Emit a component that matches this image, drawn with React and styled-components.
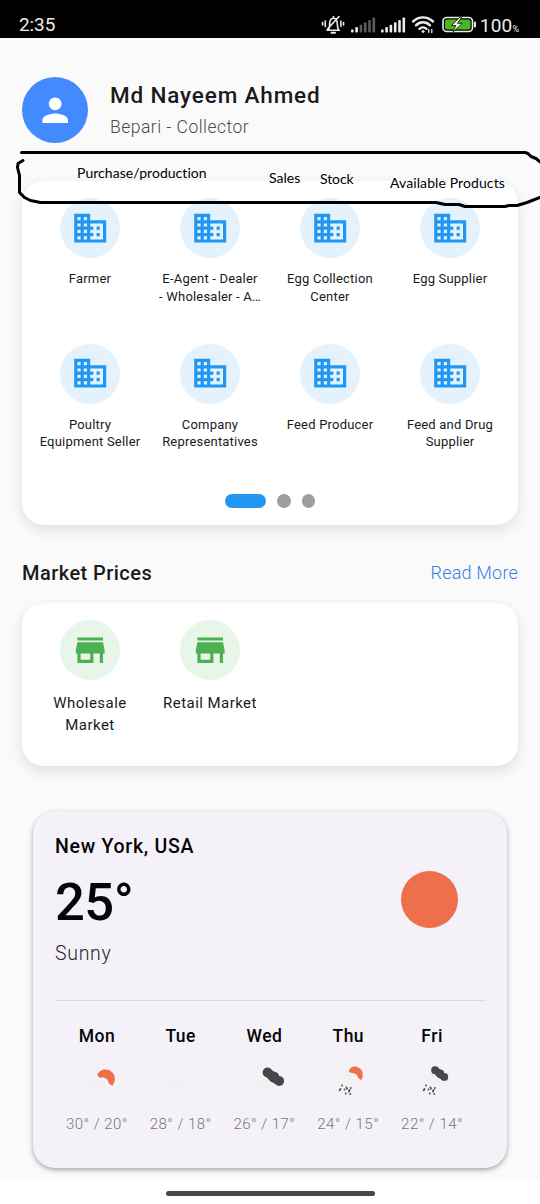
import React from 'react';
import styled, { createGlobalStyle } from 'styled-components';
import { MdBusiness, MdPerson, MdStore } from 'react-icons/md';

const Global = createGlobalStyle`
  * { box-sizing: border-box; }
  body { margin: 0; background: #fff; font-family: Roboto, "Liberation Sans", sans-serif; }
`;

const Screen = styled.div`
  position: relative;
  width: 540px;
  height: 1204px;
  overflow: hidden;
  display: flex;
  flex-direction: column;
  background: #fff;
  color: #1a1a1c;
`;

const StatusBar = styled.header`
  height: 38px;
  flex: none;
  padding: 12px 21px 0 19px;
  display: flex;
  justify-content: space-between;
  background: #000;
  color: #ececec;
`;

const Clock = styled.span`
  font-size: 19px;
  line-height: 26px;
  letter-spacing: -0.1px;
`;

const StatusIcons = styled.div`
  display: flex;
  height: 26px;
`;

const Battery = styled.span`
  font-size: 19px;
  line-height: 27px;
  letter-spacing: 0.2px;
  margin-left: 4px;
  small { font-size: 9px; letter-spacing: 0; }
`;

const Content = styled.main`
  height: 1143px;
  flex: none;
  padding: 39px 22px 0;
  overflow: hidden;
  background: #fafafa;
`;

const Profile = styled.section`
  height: 66px;
  display: flex;
  align-items: center;
  gap: 22px;
`;

const Avatar = styled.div`
  width: 66px;
  height: 66px;
  border-radius: 50%;
  display: grid;
  place-items: center;
  background: #448aff;
  color: #fff;
`;

const Name = styled.h1`
  margin: -3px 0 6px;
  font-size: 22.5px;
  font-weight: 500;
  line-height: 30px;
  letter-spacing: 0.85px;
`;

const Role = styled.p`
  margin: 0;
  font-size: 17.5px;
  font-weight: 300;
  line-height: 22px;
  letter-spacing: 0.48px;
  color: #4a4a4c;
`;

const Card = styled.section`
  height: ${(p) => p.$height}px;
  padding: 17px 8px 0;
  border-radius: 22px;
  background: #fff;
  box-shadow: 0 5px 14px rgba(0, 0, 0, 0.11);
`;

const ServiceCard = styled(Card)`
  margin-top: 38px;
`;

const Grid = styled.div`
  display: grid;
  grid-template-columns: repeat(4, 120px);
  grid-auto-rows: 145.5px;
`;

const Tile = styled.div`
  display: flex;
  flex-direction: column;
  align-items: center;
`;

const IconDisc = styled.div`
  width: 60px;
  height: 60px;
  flex: none;
  border-radius: 50%;
  display: grid;
  place-items: center;
  background: ${(p) => (p.$green ? '#e8f5e9' : '#e3f2fd')};
  color: ${(p) => (p.$green ? '#4caf50' : '#2196f3')};
`;

const TileLabel = styled.div`
  margin-top: ${(p) => (p.$large ? 12 : 12)}px;
  font-size: ${(p) => (p.$large ? 15 : 13)}px;
  line-height: ${(p) => (p.$large ? 22 : 17.8)}px;
  letter-spacing: ${(p) => (p.$large ? 0.45 : 0.2)}px;
  text-align: center;
  white-space: pre-line;
`;

const Pager = styled.div`
  margin-top: 5px;
  display: flex;
  justify-content: center;
  gap: 11px;
`;

const Dot = styled.span`
  width: ${(p) => (p.$active ? 41.5 : 13.6)}px;
  height: 13.6px;
  border-radius: 7px;
  background: ${(p) => (p.$active ? '#2196f3' : '#9e9e9e')};
`;

const SectionHead = styled.div`
  margin: 35px 0 17px;
  height: 26px;
  display: flex;
  justify-content: space-between;
  align-items: center;
`;

const SectionTitle = styled.h2`
  margin: 0;
  font-size: 20px;
  font-weight: 500;
  letter-spacing: 0.45px;
`;

const ReadMore = styled.a`
  font-size: 18px;
  font-weight: 300;
  line-height: 24px;
  letter-spacing: 0.2px;
  margin-top: -1px;
  color: #3b7de8;
`;

const Weather = styled.section`
  margin: 45px 11px 0;
  height: 357px;
  padding: 23px 21px 0 22px;
  border-radius: 22px;
  background: #f5f1f9;
  color: #050505;
  box-shadow: 0 2px 5px rgba(0, 0, 0, 0.34);
`;

const Current = styled.div`
  height: 167px;
  display: flex;
  justify-content: space-between;
  border-bottom: 1px solid #dedae2;
`;

const City = styled.h3`
  margin: 0;
  font-size: 19.5px;
  font-weight: 500;
  line-height: 26px;
  letter-spacing: 0.72px;
`;

const Temperature = styled.div`
  margin-top: 9px;
  font-size: 52.5px;
  font-weight: 500;
  line-height: 66px;
  letter-spacing: -0.5px;
`;

const Condition = styled.div`
  margin-top: 6px;
  font-size: 19.5px;
  font-weight: 300;
  line-height: 26px;
  letter-spacing: 0.7px;
  color: #29272c;
`;

const Sun = styled.div`
  width: 57px;
  height: 57px;
  margin: 37px 28px 0 0;
  border-radius: 50%;
  background: #ee6f4c;
`;

const Forecast = styled.div`
  padding-top: 22px;
  display: grid;
  grid-template-columns: repeat(5, 83.8px);
`;

const Day = styled.div`
  display: flex;
  flex-direction: column;
  align-items: center;
`;

const DayName = styled.div`
  margin-bottom: 10px;
  font-size: 17.5px;
  font-weight: 500;
  line-height: 26px;
  letter-spacing: 0.5px;
`;

const Range = styled.div`
  margin-top: 13px;
  font-size: 15px;
  font-weight: 300;
  line-height: 20px;
  letter-spacing: 0.45px;
  color: #77747a;
  white-space: nowrap;
`;

const HomeBar = styled.div`
  width: 209px;
  height: 5px;
  margin: 9.500px auto 0;
  border-radius: 3px;
  background: #484848;
`;

const Markup = styled.svg`
  position: absolute;
  left: 0;
  top: 140px;
`;

const Note = styled.span`
  position: absolute;
  left: ${(p) => p.$x}px;
  top: ${(p) => p.$y}px;
  font-family: Lato, sans-serif;
  font-size: 14px;
  line-height: 18px;
  letter-spacing: ${(p) => p.$spacing}px;
  color: #000;
  white-space: nowrap;
`;

const Signal = ({ lit }) =>
  [0, 1, 2, 3, 4, 5].map((i) => (
    <rect key={i} x={i * 4.3} y={18 - i * 2.4} width="2.6" height={3 + i * 2.4} rx="0.8" fill={i < lit ? '#ececec' : '#5c5c5c'} />
  ));

const StatusGlyphs = () => (
  <svg width="155" height="26" viewBox="320 12 155 26" fill="none" stroke="#ececec" strokeWidth="1.6" strokeLinecap="round">
    <path d="M326 30.2h12.5M327.5 30c1.3-1.8 1-4 1.1-6.500c.2-3.300 1.600-5.300 3.900-5.300s3.600 2 3.800 5.300c.1 2.500 0 4.700 1.300 6.500M338 16.500L326.500 29M324.300 21v5.500M321.600 22.500v2.500M339.900 21v5.500M342.500 22.500v2.500M332.500 16.500v1" />
    <path d="M330.500 32.700h3.500" strokeWidth="2" />
    <g stroke="none">
      <g transform="translate(350 11.500)"><Signal lit={2} /></g>
      <g transform="translate(380 11.500)"><Signal lit={6} /></g>
    </g>
    <g strokeWidth="2.400">
      <path d="M412 21.500c6-5.500 14-5.500 20 0M415 25.300c4.200-4 9.800-4 14 0M418.500 28.800c2-1.900 5-1.900 7 0" />
      <circle cx="422" cy="31.500" r="1" fill="#ececec" strokeWidth="1" />
      <path d="M427.800 29.500v3M430.800 29.500v3" strokeWidth="1.300" />
    </g>
    <rect x="442" y="17.500" width="29.500" height="14" rx="3.800" />
    <rect x="444" y="19.500" width="25.500" height="10" rx="1.800" fill="#4cb51f" stroke="none" />
    <path d="M474 22.500v4" strokeWidth="2" />
    <path d="M458.500 17.500l-8 8h4.300l-3 6.800 9.500-9h-4.800l4-5.800z" fill="#f2f2f2" stroke="#163d0b" strokeWidth="1" />
  </svg>
);

const ForecastIcon = ({ sun, dark, rain }) => {
  const cloud = rain
    ? 'M17 25c-1-6 2-9 4-9c1-5 5-6 8-3c5 0 7 5 9 12z'
    : 'M10 33c0-4 3-6 6-7c2-5 7-9 12-6c6 1 9 7 13 13z';
  return (
    <svg width="56" height="42" viewBox="0 0 56 42">
      <path d={cloud} fill="#f1f1f2" />
      {sun && (rain ? (
        <path d="M28.800 12.500c1-5 6.500-5.800 9.500-4c5 2 5.500 8 3.200 12.500c-3-.800-3.500-3.500-5-5.500c-2.500-2-5-.500-7.700-3z" fill="#ee6f4c" />
      ) : (
        <path d="M28.300 16c2.200-7 12.200-7.500 16.200-1.300c2.300 4 1.500 8-1 12l-3.500-2-1.500-4-3.800-2.500-4 .500z" fill="#ee6f4c" />
      ))}
      {dark && (
        <g fill="#47464a" transform={rain ? 'translate(6.200 .500) scale(.79)' : undefined}>
          <circle cx="31.500" cy="13.500" r="4.900" />
          <path d="M33 9l5.500 4 3.500 1.500 1.500 4-3 7-6-3-4.500-5z" />
          <circle cx="38" cy="17.500" r="4.800" />
          <circle cx="43.200" cy="22" r="4.900" />
        </g>
      )}
      {rain && (
        <path d="M22 26.500v.1M20.500 30l-.8 1.200M24.500 30.500v.1M26.500 28.500l.5 1.200M25.800 34.500v.1M30.800 29v.1M29.500 31l-.5 1.500M30.300 35v.1" fill="none" stroke="#4e4c54" strokeWidth="1.900" strokeLinecap="round" />
      )}
    </svg>
  );
};

const services = [
  'Farmer',
  'E-Agent - Dealer\n- Wholesaler - A…',
  'Egg Collection\nCenter',
  'Egg Supplier',
  'Poultry\nEquipment Seller',
  'Company\nRepresentatives',
  'Feed Producer',
  'Feed and Drug\nSupplier',
];

const days = [
  { name: 'Mon', range: '30° / 20°', sun: true },
  { name: 'Tue', range: '28° / 18°' },
  { name: 'Wed', range: '26° / 17°', dark: true },
  { name: 'Thu', range: '24° / 15°', sun: true, rain: true },
  { name: 'Fri', range: '22° / 14°', dark: true, rain: true },
];

export default function App() {
  return (
    <Screen>
      <Global />
      <StatusBar>
        <Clock>2:35</Clock>
        <StatusIcons>
          <StatusGlyphs />
          <Battery>100<small>%</small></Battery>
        </StatusIcons>
      </StatusBar>
      <Content>
        <Profile>
          <Avatar><MdPerson size={38.4} /></Avatar>
          <div>
            <Name>Md Nayeem Ahmed</Name>
            <Role>Bepari - Collector</Role>
          </div>
        </Profile>
        <ServiceCard $height={344}>
          <Grid>
            {services.map((label) => (
              <Tile key={label}>
                <IconDisc><MdBusiness size={38.4} /></IconDisc>
                <TileLabel>{label}</TileLabel>
              </Tile>
            ))}
          </Grid>
          <Pager><Dot $active /><Dot /><Dot /></Pager>
        </ServiceCard>
        <SectionHead>
          <SectionTitle>Market Prices</SectionTitle>
          <ReadMore>Read More</ReadMore>
        </SectionHead>
        <Card $height={163}>
          <Grid>
            {['Wholesale\nMarket', 'Retail Market'].map((label) => (
              <Tile key={label}>
                <IconDisc $green><MdStore size={38.4} /></IconDisc>
                <TileLabel $large>{label}</TileLabel>
              </Tile>
            ))}
          </Grid>
        </Card>
        <Weather>
          <Current>
            <div>
              <City>New York, USA</City>
              <Temperature>25°</Temperature>
              <Condition>Sunny</Condition>
            </div>
            <Sun />
          </Current>
          <Forecast>
            {days.map((d) => (
              <Day key={d.name}>
                <DayName>{d.name}</DayName>
                <ForecastIcon {...d} />
                <Range>{d.range}</Range>
              </Day>
            ))}
          </Forecast>
        </Weather>
      </Content>
      <HomeBar />
      <Markup width="540" height="72" viewBox="0 140 540 72" fill="none" stroke="#000" strokeWidth="3" strokeLinecap="round" strokeLinejoin="round">
        <path d="M21.500 152.500H525l3 1 3 3 5 2 6 5M23 160.500l-5 3-.500 4 2 8v17l5 5 6 3 10 2H436l9 2h14l6 2h40l4-1h8l10-3 13-5" />
      </Markup>
      <Note $x={77} $y={164} $spacing={0.04}>Purchase/production</Note>
      <Note $x={269} $y={169} $spacing={0}>Sales</Note>
      <Note $x={320} $y={170} $spacing={-0.1}>Stock</Note>
      <Note $x={390} $y={174} $spacing={0.1}>Available Products</Note>
    </Screen>
  );
}
